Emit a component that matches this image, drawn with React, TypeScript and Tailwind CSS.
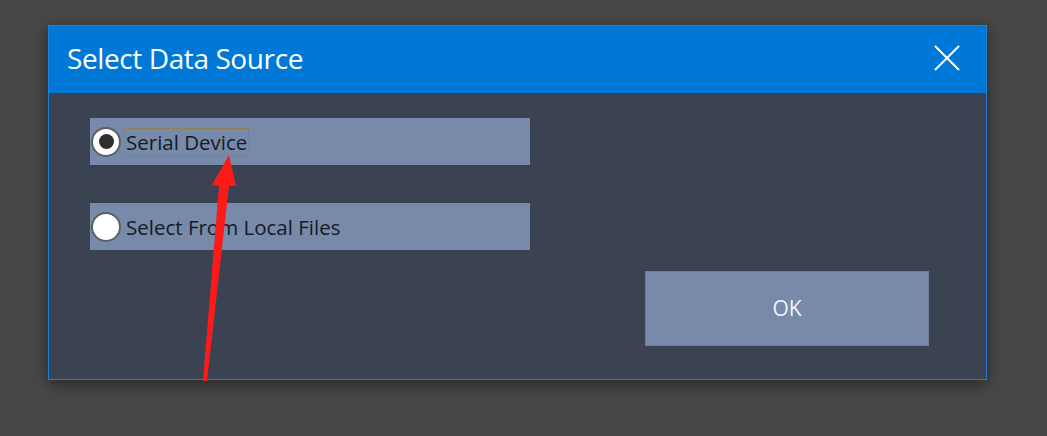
import React from 'react';

const Radio = ({ checked }: { checked: boolean }): React.ReactElement => {
  return (
    <span className="flex h-[30px] w-[30px] shrink-0 items-center justify-center rounded-full border-2 border-[#5a5f68] bg-white">
      {checked && <span className="h-[15px] w-[15px] rounded-full bg-[#2e2e2e]" />}
    </span>
  );
};

const Option = ({
  label,
  checked,
  focused,
}: {
  label: string;
  checked: boolean;
  focused?: boolean;
}): React.ReactElement => {
  return (
    <div className="flex h-[47px] w-[440px] items-center bg-[#778aa9] pl-[1px]">
      <Radio checked={checked} />
      <span
        className={
          focused
            ? 'ml-[3px] inline-block border border-dotted border-[#8c7a50] px-[1px] text-[20.5px] leading-[26px] text-[#161a26]'
            : 'ml-[4px] inline-block px-[1px] text-[20.5px] leading-[26px] text-[#161a26]'
        }
      >
        {label}
      </span>
    </div>
  );
};

export default function App(): React.ReactElement {
  return (
    <div
      className="relative h-[436px] w-[1047px] overflow-hidden bg-[#474747] pl-[48px] pt-[25px]"
      style={{ fontFamily: '"Open Sans", "Noto Sans", sans-serif' }}
    >
      <div className="flex h-[355px] w-[939px] flex-col border border-[#1f7fd6] bg-[#3b4353] shadow-[0_4px_14px_rgba(0,0,0,0.45)]">
        <div className="flex h-[67px] shrink-0 items-center justify-between bg-[#0078d7] pb-[4px] pl-[18px] pr-[26px]">
          <span className="text-[28px] tracking-[-0.4px] text-white">Select Data Source</span>
          <svg width="26" height="26" viewBox="0 0 26 26" className="text-white">
            <path d="M1 1 L25 25 M25 1 L1 25" stroke="currentColor" strokeWidth="2" />
          </svg>
        </div>
        <div className="flex flex-1 justify-between pl-[41px] pr-[57px]">
          <div className="flex flex-col gap-[38px] pt-[25px]">
            <Option label="Serial Device" checked focused />
            <Option label="Select From Local Files" checked={false} />
          </div>
          <div className="pt-[178px]">
            <button className="flex h-[75px] w-[284px] items-center justify-center border border-[#6d7e99] bg-[#778aa9] text-[21px] text-[#eef2f7]">
              OK
            </button>
          </div>
        </div>
      </div>
      <svg className="absolute left-0 top-0" width="1047" height="436" viewBox="0 0 1047 436">
        <path d="M203 381 L219 186 L212 185 L229 155 L236 186 L229 186 L207 381 Z" fill="#ff1a1a" />
      </svg>
    </div>
  );
}
